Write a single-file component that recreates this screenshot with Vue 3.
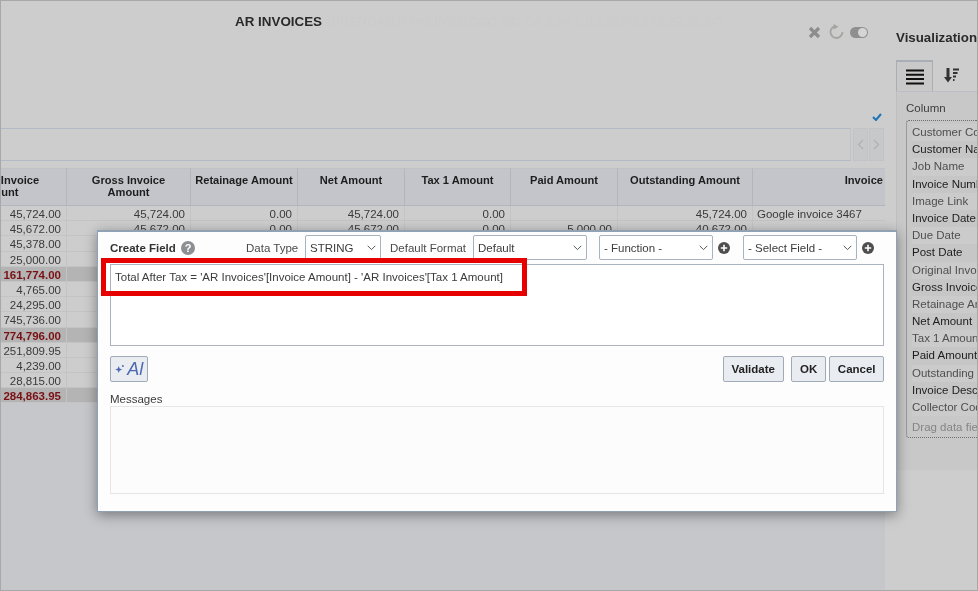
<script setup>
const headers = [
  'Original Invoice\nAmount',
  'Gross Invoice\nAmount',
  'Retainage Amount',
  'Net Amount',
  'Tax 1 Amount',
  'Paid Amount',
  'Outstanding Amount',
  'Invoice'
]
const rows = [
  { c: ['45,724.00', '45,724.00', '0.00', '45,724.00', '0.00', '', '45,724.00', 'Google invoice 3467'] },
  { c: ['45,672.00', '45,672.00', '0.00', '45,672.00', '0.00', '5,000.00', '40,672.00', ''] },
  { c: ['45,378.00'] },
  { c: ['25,000.00'] },
  { c: ['161,774.00'], total: true },
  { c: ['4,765.00'] },
  { c: ['24,295.00'] },
  { c: ['745,736.00'] },
  { c: ['774,796.00'], total: true },
  { c: ['251,809.95'] },
  { c: ['4,239.00'] },
  { c: ['28,815.00'] },
  { c: ['284,863.95'], total: true }
]
const cells = (r) => Array.from({ length: 8 }, (_, i) => r.c[i] || '')
const fields = [
  'Customer Code', 'Customer Name', 'Job Name', 'Invoice Number', 'Image Link', 'Invoice Date',
  'Due Date', 'Post Date', 'Original Invoice', 'Gross Invoice', 'Retainage Amount', 'Net Amount',
  'Tax 1 Amount', 'Paid Amount', 'Outstanding', 'Invoice Description', 'Collector Code'
]
</script>

<template>
  <div class="page">
    <div class="main">
      <header class="top">
        <div class="title-row">
          <span class="title">AR INVOICES</span>
          <span class="ghost">(BRENDAN.RAWLINS@CCC.MC.CA;2.84;1.0.120992.172.29.38.24)</span>
          <span class="tools">
            <svg width="13" height="13" viewBox="0 0 13 13"><path d="M2 2l9 9M11 2l-9 9" stroke="#8d8d8d" stroke-width="3.2" fill="none"/></svg>
            <svg class="t-refresh" width="15" height="16" viewBox="0 0 15 16"><path d="M13.500 8A6 6 0 1 1 2.600 4.500 6 6 0 0 1 5 2.600" stroke="#a5a59f" stroke-width="1.800" fill="none"/><path d="M4.500 0l5 2.800-5 2.800z" fill="#a5a59f"/></svg>
            <span class="toggle"><i></i></span>
          </span>
        </div>
        <svg class="check" width="10" height="8" viewBox="0 0 10 8"><path d="M1 4l3 3 5-6" stroke="#1f74b8" stroke-width="2" fill="none"/></svg>
      </header>

      <div class="search">
        <div class="search-box"></div>
        <div class="nav">
          <svg width="7" height="11" viewBox="0 0 7 11"><path d="M6 1L1.500 5.500 6 10" stroke="#b0b0b0" stroke-width="1.200" fill="none"/></svg>
        </div>
        <div class="nav">
          <svg width="7" height="11" viewBox="0 0 7 11"><path d="M1 1l4.500 4.500L1 10" stroke="#b0b0b0" stroke-width="1.200" fill="none"/></svg>
        </div>
      </div>

      <div class="table-clip">
        <div class="table">
          <div v-for="(h, i) in headers" :key="h" class="th" :class="{ 'th-last': i === 7 }">{{ h }}</div>
          <template v-for="(r, ri) in rows" :key="ri">
            <div
              v-for="(v, ci) in cells(r)"
              :key="ci"
              class="td"
              :class="{ total: r.total, text: ci === 7 }"
            >{{ v }}</div>
          </template>
        </div>
      </div>
    </div>

    <aside class="side">
      <div class="side-title">Visualization</div>
      <div class="tabs">
        <div class="tab active">
          <svg width="18" height="16" viewBox="0 0 18 16"><path d="M0 1.500h18M0 5.800h18M0 10.100h18M0 14.500h18" stroke="#111" stroke-width="2"/></svg>
        </div>
        <div class="tab">
          <svg width="16" height="15" viewBox="0 0 16 15"><path d="M4 0v10" stroke="#333" stroke-width="3"/><path d="M0 9h8l-4 5.500z" fill="#333"/><path d="M9 1.500h6M9 5h4.500M9 8.500h3M9 12h1.500" stroke="#333" stroke-width="2"/></svg>
        </div>
      </div>
      <div class="panel">
        <div class="col-label">Column</div>
        <div class="drop">
          <div class="list">
            <div v-for="(f, i) in fields" :key="f" class="field" :class="{ dark: i % 2 === 1 }">{{ f }}</div>
            <div class="field hint">Drag data fields here</div>
          </div>
        </div>
      </div>
    </aside>

    <section class="dialog">
      <div class="d-row">
        <strong class="d-title">Create Field</strong>
        <span class="help">?</span>
        <label class="lbl l-type">Data Type</label>
        <div class="sel s-type">STRING
          <svg class="chev" width="9" height="6" viewBox="0 0 9 6"><path d="M.7.800l3.800 3.800L8.300.800" stroke="#555" fill="none"/></svg>
        </div>
        <label class="lbl l-format">Default Format</label>
        <div class="sel s-format">Default
          <svg class="chev" width="9" height="6" viewBox="0 0 9 6"><path d="M.7.800l3.800 3.800L8.300.800" stroke="#555" fill="none"/></svg>
        </div>
        <div class="sel s-fn">- Function -
          <svg class="chev" width="9" height="6" viewBox="0 0 9 6"><path d="M.7.800l3.800 3.800L8.300.800" stroke="#555" fill="none"/></svg>
        </div>
        <svg class="plus" width="12" height="12" viewBox="0 0 12 12"><circle cx="6" cy="6" r="6" fill="#4e4e4e"/><path d="M6 2.800v6.400M2.800 6h6.400" stroke="#fff" stroke-width="1.600"/></svg>
        <div class="sel s-field">- Select Field -
          <svg class="chev" width="9" height="6" viewBox="0 0 9 6"><path d="M.7.800l3.800 3.800L8.300.800" stroke="#555" fill="none"/></svg>
        </div>
        <svg class="plus" width="12" height="12" viewBox="0 0 12 12"><circle cx="6" cy="6" r="6" fill="#4e4e4e"/><path d="M6 2.800v6.400M2.800 6h6.400" stroke="#fff" stroke-width="1.600"/></svg>
      </div>

      <div class="editor">Total After Tax = 'AR Invoices'[Invoice Amount] - 'AR Invoices'[Tax 1 Amount]</div>

      <div class="actions">
        <button class="btn ai">
          <svg width="13" height="13" viewBox="0 0 11 11"><path d="M4 2.500l.8 2.200 2.200.8-2.200.8L4 8.500l-.8-2.200L1 5.500l2.200-.8z" fill="#4d68b0"/><circle cx="7.500" cy="2.500" r=".8" fill="#4d68b0"/></svg>
          <span>Al</span>
        </button>
        <button class="btn b-validate">Validate</button>
        <button class="btn b-ok">OK</button>
        <button class="btn b-cancel">Cancel</button>
      </div>

      <div class="msg-label">Messages</div>
      <div class="msg-box"></div>

      <div class="highlight"></div>
    </section>
  </div>
</template>

<style>
html, body { margin: 0; overflow: hidden; }
</style>

<style scoped>
.page {
  position: relative;
  display: flex;
  box-sizing: border-box;
  width: 978px;
  height: 591px;
  overflow: hidden;
  background: #cdcdcd;
  border: 1px solid #a8a8a8;
  font-family: "Liberation Sans", Arial, sans-serif;
  font-size: 11.500px;
  color: #3a3a3a;
  filter: blur(.35px);
}

/* main column */
.main {
  display: flex;
  flex-direction: column;
  flex: none;
  width: 884px;
  height: 100%;
  background: linear-gradient(#cdcdcd 0 167px, #c5c7cb 167px);
}
.top {
  flex: none;
  height: 127px;
  box-sizing: border-box;
  display: flex;
  flex-direction: column;
  padding: 13px 0 0 234px;
  background: #cdcdcd;
}
.title-row { display: flex; align-items: flex-start; height: 16px; }
.title { flex: none; width: 88px; font-size: 13.400px; font-weight: 700; color: #2a2a2a; line-height: 16px; white-space: nowrap; }
.ghost { flex: none; width: 398px; margin-left: 4px; font-size: 12.900px; line-height: 16px; color: #cbcbcb; white-space: nowrap; }
.tools { display: flex; align-items: center; margin: 10px 0 0 83px; height: 16px; }
.t-refresh { margin: 0 6px 0 8px; }
.toggle { position: relative; display: block; width: 18px; height: 11px; border-radius: 6px; background: #8f8f8f; }
.toggle i { position: absolute; right: 1px; top: 1px; width: 9px; height: 9px; border-radius: 50%; background: #d5d5d5; }
.check { margin: 83px 0 0 637px; }

.search { flex: none; display: flex; height: 33px; gap: 1px; background: #cdcdcd; }
.search-box { width: 850px; border: 1px solid #b3b8c5; border-right-color: #bfc2c9; border-left: 0; box-sizing: border-box; margin-right: 1px; }
.nav { width: 15px; display: flex; align-items: center; justify-content: center; background: #c7c8ca; border: 1px solid #c2c3c6; box-sizing: border-box; }

.table-clip { margin-top: 7px; overflow: hidden; width: 884px; height: 237px; flex: none; }
.table {
  display: grid;
  grid-template-columns: 138px 124px 107px 107px 106px 107px 135px 133px;
  grid-template-rows: 38px repeat(13, 15.200px);
  margin-left: -72px;
  width: 957px;
}
.th {
  background: #c3c5ca;
  color: #1d1d1d;
  font-size: 11.100px;
  font-weight: 700;
  text-align: center;
  white-space: pre-line;
  line-height: 12px;
  padding: 5px 0 0;
  border-right: 1px solid #b2b5bc;
  border-bottom: 1px solid #b2b5bc;
  border-top: 1px solid #bfc1c6;
  box-sizing: border-box;
}
.th-last { text-align: right; padding-right: 3px; border-right: 0; }
.td {
  background: #cdcdcd;
  text-align: right;
  line-height: 16px;
  padding-right: 5px;
  border-right: 1px solid #c3c4c6;
  border-bottom: 1px solid #c3c4c6;
  box-sizing: border-box;
  white-space: nowrap;
  overflow: hidden;
}
.td.text { text-align: left; padding: 0 0 0 4px; border-right: 0; }
.td.total { background: #b4b4b4; color: #7a0f14; font-weight: 700; }

/* side */
.side { flex: 1; min-width: 0; overflow: hidden; background: #cdcdcd; padding-top: 28px; }
.side-title { font-size: 13.300px; font-weight: 700; color: #2a2a2a; margin-left: 11px; line-height: 18px; white-space: nowrap; }
.tabs { display: flex; align-items: stretch; height: 31px; margin: 13px 0 0 11px; }
.tab { width: 37px; display: flex; align-items: center; justify-content: center; box-sizing: border-box; }
.tab.active { background: #c9c9c9; border: 1px solid #a9adb5; border-width: 2px 1px 0 1px; border-bottom: 0; }
.panel { margin-left: 11px; height: 379px; background: #c8c8c8; box-sizing: border-box; padding: 9px 0 0 9px; overflow: hidden; border-left: 1px solid #bcbec3; border-top: 1px solid #bcbec3; position: relative; }
.col-label { line-height: 14px; color: #3d3d3d; margin-bottom: 5px; }
.drop { border: 1px dotted #6d6d6d; border-right: 0; border-radius: 3px 0 0 3px; height: 318px; box-sizing: border-box; padding: 3px 0 0 5px; overflow: hidden; }
.list { width: 200px; }
.field { line-height: 17.200px; height: 17.200px; white-space: nowrap; color: #4f4f4f; background: #cbcbcb; }
.field.dark { color: #1d1d1d; background: #c6c6c6; }
.field.hint { color: #858585; margin-top: 3px; background: transparent; }

/* dialog */
.dialog {
  position: absolute;
  left: 96px;
  top: 229px;
  width: 800px;
  height: 282px;
  box-sizing: border-box;
  background: #fdfdfe;
  border: 1px solid #8fa1b3;
  border-top-width: 2px;
  box-shadow: 0 3px 12px rgba(0, 0, 0, .4);
  padding: 3px 12px 0 12px;
}
.d-row { display: flex; align-items: center; height: 25px; }
.d-title { color: #333; width: 71px; white-space: nowrap; }
.help {
  width: 14px; height: 14px; border-radius: 50%;
  background: #8c8f93; color: #fff; font-weight: 700; font-size: 11px;
  display: flex; align-items: center; justify-content: center;
}
.lbl { color: #4b4b4b; white-space: nowrap; }
.l-type { margin-left: 51px; width: 59px; }
.l-format { margin-left: 9px; width: 83px; }
.sel {
  position: relative;
  box-sizing: border-box;
  height: 25px;
  line-height: 25px;
  padding-left: 4px;
  color: #3c3c3c;
  background: #fff;
  border: 1px solid #a9b3bf;
  border-radius: 2px;
}
.chev { position: absolute; right: 4px; top: 9px; }
.s-type { width: 76px; }
.s-format { width: 114px; }
.s-fn { width: 114px; margin-left: 12px; }
.s-field { width: 114px; margin-left: 13px; }
.plus { margin-left: 5px; flex: none; }
.editor {
  margin-top: 4px;
  height: 82px;
  box-sizing: border-box;
  border: 1px solid #aab4c0;
  line-height: 24px;
  padding-left: 4px;
  color: #3c3c3c;
  background: #fff;
}
.actions { display: flex; margin-top: 10px; height: 26px; }
.btn {
  box-sizing: border-box;
  height: 26px;
  padding: 0;
  border: 1px solid #a0abb7;
  border-radius: 2px;
  background: #e9edf2;
  font-family: inherit;
  font-size: 11.500px;
  font-weight: 700;
  color: #222;
}
.ai { width: 38px; display: flex; align-items: center; justify-content: center; gap: 0; }
.ai span { font-size: 18px; line-height: 22px; font-style: italic; font-weight: 400; color: #4d68b0; }
.b-validate { width: 61px; margin-left: 575px; flex: none; }
.b-ok { width: 36px; margin-left: 7px; }
.b-cancel { width: 55px; margin-left: 3px; }
.msg-label { margin-top: 10px; line-height: 14px; color: #3c3c3c; }
.msg-box { margin-top: 0; height: 88px; box-sizing: border-box; border: 1px solid #e6e6e6; background: #fcfcfc; }
.highlight {
  position: absolute;
  left: 3px;
  top: 26px;
  width: 426px;
  height: 38px;
  box-sizing: border-box;
  border: 5px solid #e60000;
  pointer-events: none;
}
</style>
